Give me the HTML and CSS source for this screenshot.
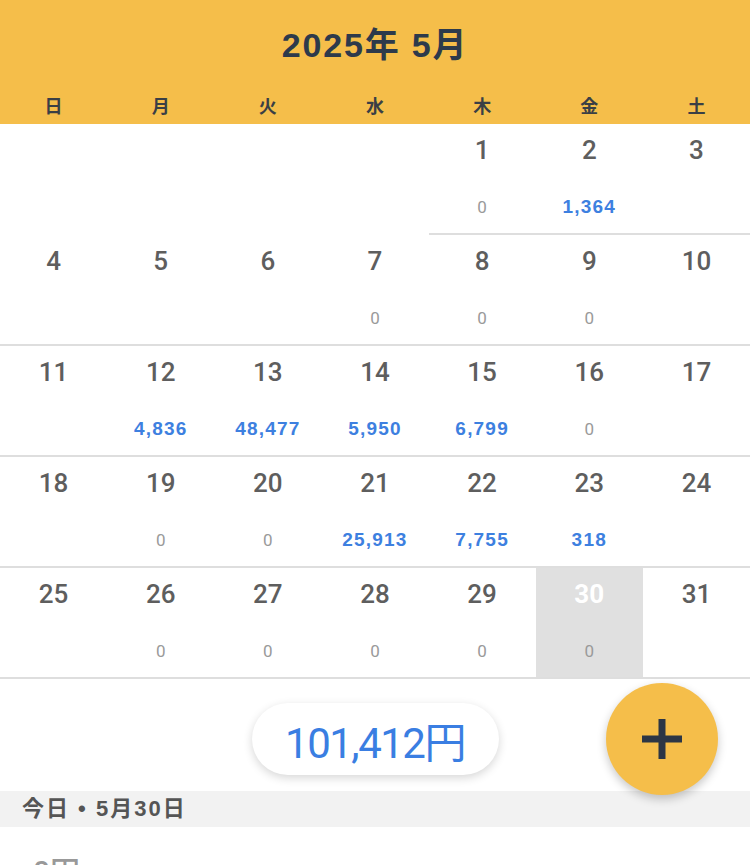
FILE: index.html
```html
<!DOCTYPE html>
<html lang="ja">
<head>
<meta charset="utf-8">
<link rel="stylesheet" href="styles.css">
</head>
<body>
<div class="app">
  <header class="header">
    <div class="title">2025年 5月</div>
    <div class="weekdays">
      <span>日</span><span>月</span><span>火</span><span>水</span><span>木</span><span>金</span><span>土</span>
    </div>
  </header>
  <div class="calendar">
    <div class="cell empty"></div>
    <div class="cell empty"></div>
    <div class="cell empty"></div>
    <div class="cell empty"></div>
    <div class="cell"><div class="day">1</div><div class="amt zero">0</div></div>
    <div class="cell"><div class="day">2</div><div class="amt">1,364</div></div>
    <div class="cell"><div class="day">3</div><div class="amt"></div></div>

    <div class="cell"><div class="day">4</div><div class="amt"></div></div>
    <div class="cell"><div class="day">5</div><div class="amt"></div></div>
    <div class="cell"><div class="day">6</div><div class="amt"></div></div>
    <div class="cell"><div class="day">7</div><div class="amt zero">0</div></div>
    <div class="cell"><div class="day">8</div><div class="amt zero">0</div></div>
    <div class="cell"><div class="day">9</div><div class="amt zero">0</div></div>
    <div class="cell"><div class="day">10</div><div class="amt"></div></div>

    <div class="cell"><div class="day">11</div><div class="amt"></div></div>
    <div class="cell"><div class="day">12</div><div class="amt">4,836</div></div>
    <div class="cell"><div class="day">13</div><div class="amt">48,477</div></div>
    <div class="cell"><div class="day">14</div><div class="amt">5,950</div></div>
    <div class="cell"><div class="day">15</div><div class="amt">6,799</div></div>
    <div class="cell"><div class="day">16</div><div class="amt zero">0</div></div>
    <div class="cell"><div class="day">17</div><div class="amt"></div></div>

    <div class="cell"><div class="day">18</div><div class="amt"></div></div>
    <div class="cell"><div class="day">19</div><div class="amt zero">0</div></div>
    <div class="cell"><div class="day">20</div><div class="amt zero">0</div></div>
    <div class="cell"><div class="day">21</div><div class="amt">25,913</div></div>
    <div class="cell"><div class="day">22</div><div class="amt">7,755</div></div>
    <div class="cell"><div class="day">23</div><div class="amt">318</div></div>
    <div class="cell"><div class="day">24</div><div class="amt"></div></div>

    <div class="cell"><div class="day">25</div><div class="amt"></div></div>
    <div class="cell"><div class="day">26</div><div class="amt zero">0</div></div>
    <div class="cell"><div class="day">27</div><div class="amt zero">0</div></div>
    <div class="cell"><div class="day">28</div><div class="amt zero">0</div></div>
    <div class="cell"><div class="day">29</div><div class="amt zero">0</div></div>
    <div class="cell today"><div class="day">30</div><div class="amt zero">0</div></div>
    <div class="cell"><div class="day">31</div><div class="amt"></div></div>
  </div>
  <div class="total-row">
    <div class="total-pill">101,412円</div>
  </div>
  <div class="section-bar">今日 • 5月30日</div>
  <div class="entry">0円</div>
  <button class="fab" aria-label="追加">
    <svg width="46" height="46" viewBox="0 0 46 46"><path d="M23 3v40M3 23h40" stroke="#2c3645" stroke-width="7" stroke-linecap="butt" fill="none"/></svg>
  </button>
</div>
</body>
</html>
```
FILE: styles.css
```css
* { box-sizing: border-box; }
html, body { margin: 0; padding: 0; background: #fff; }
body {
  font-family: Roboto, "Noto Sans CJK JP", sans-serif;
  width: 750px;
  height: 865px;
  overflow: hidden;
}
.app { position: relative; width: 750px; }
.header {
  background: #f5be4a;
  height: 124px;
}
.title {
  height: 90px;
  line-height: 90px;
  text-align: center;
  font-family: "Liberation Sans", "Noto Sans CJK JP", sans-serif;
  font-size: 34px;
  font-weight: 700;
  color: #2d3a4b;
  letter-spacing: 1.8px;
}
.weekdays {
  display: grid;
  grid-template-columns: repeat(7, 1fr);
  height: 34px;
  line-height: 34px;
  font-size: 18px;
  font-weight: 700;
  color: #3a3f45;
  text-align: center;
}
.calendar {
  display: grid;
  grid-template-columns: repeat(7, 1fr);
}
.cell {
  height: 111px;
  border-bottom: 2px solid #dedede;
  text-align: center;
  padding-top: 11px;
}
.cell.empty { border-bottom-color: transparent; }
.day {
  font-size: 26px;
  line-height: 30px;
  font-weight: 500;
  color: #5e5e5e;
}
.amt {
  margin-top: 32px;
  height: 20px;
  font-family: "Liberation Sans", sans-serif;
  font-size: 19px;
  line-height: 20px;
  font-weight: 700;
  letter-spacing: 1.2px;
  color: #3d80e0;
}
.amt.zero {
  font-family: Roboto, sans-serif;
  color: #9a9a9a;
  font-weight: 400;
  font-size: 17px;
  letter-spacing: 0;
}
.cell.today { background: #e0e0e0; }
.cell.today .day { color: #fff; font-weight: 700; }
.total-row {
  height: 112px;
  padding-top: 24px;
  display: flex;
  justify-content: center;
  align-items: flex-start;
}
.total-pill {
  width: 247px;
  height: 72px;
  border-radius: 36px;
  background: #fff;
  box-shadow: 0 3px 10px rgba(0,0,0,0.16);
  display: flex;
  align-items: center;
  justify-content: center;
  font-size: 42px;
  letter-spacing: -1.5px;
  color: #3a7ee2;
}
.section-bar {
  height: 36px;
  background: #f2f2f2;
  padding-left: 22px;
  line-height: 36px;
  font-family: "Liberation Sans", "Noto Sans CJK JP", sans-serif;
  font-size: 22px;
  font-weight: 700;
  letter-spacing: 2px;
  color: #555;
}
.entry {
  padding: 20px 0 0 33px;
  font-size: 30px;
  font-weight: 500;
  color: #999;
}
.fab {
  position: absolute;
  left: 606px;
  top: 683px;
  width: 112px;
  height: 112px;
  border-radius: 50%;
  border: none;
  background: #f5be4a;
  box-shadow: 0 4px 10px rgba(0,0,0,0.22);
  display: flex;
  align-items: center;
  justify-content: center;
  padding: 0;
}
```
